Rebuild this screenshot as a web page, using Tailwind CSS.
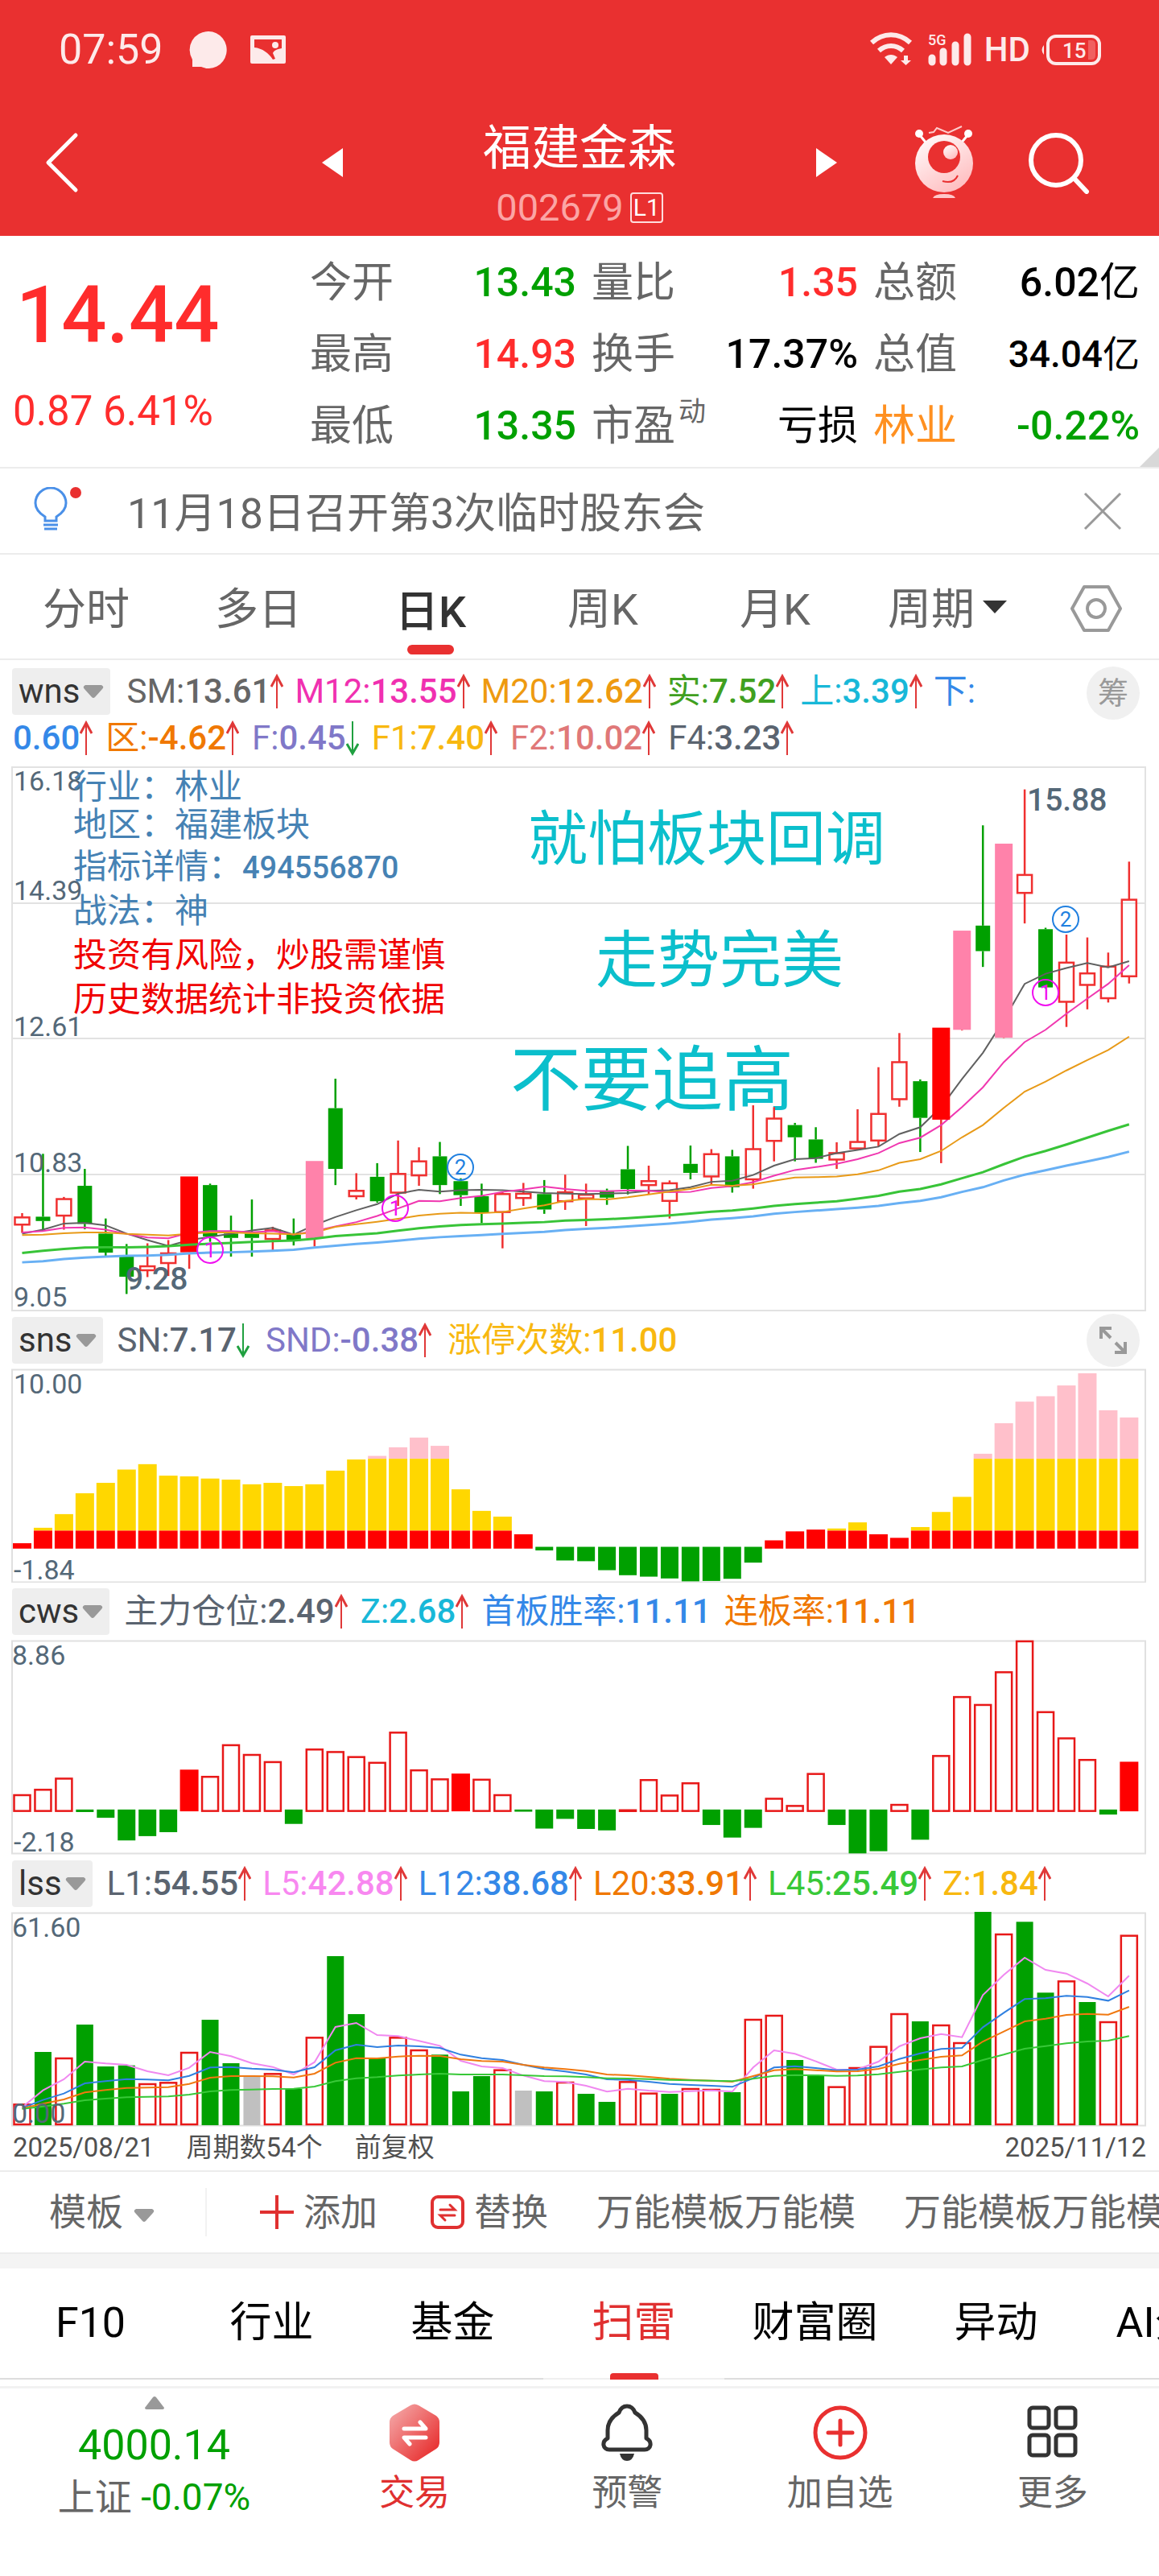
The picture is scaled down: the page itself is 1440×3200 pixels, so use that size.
<!DOCTYPE html>
<html lang="zh-CN">
<head>
    <meta charset="UTF-8">
    <meta name="viewport" content="width=device-width, initial-scale=1.0">
    <title>福建金森 002679</title>
    <script src="https://cdn.jsdelivr.net/npm/@tailwindcss/browser@4"></script>
</head>
<body class="bg-white text-[#666] font-[Roboto,'Noto_Sans_CJK_SC',sans-serif] overflow-x-hidden">
    <header class="bg-[#e93030] text-white">
        <!-- Status bar -->
        <div class="flex h-[124px] items-center justify-between pl-[73px] pr-[72px] text-[#fdeaea]">
            <div class="flex items-center">
                <span class="text-[52px] leading-none">07:59</span>
                <svg class="ml-8 h-12 w-12" viewBox="0 0 48 48" fill="currentColor"><path d="M24 1a22.500 23 0 1 1-9 44H4v-9A23 23 0 0 1 24 1z"/></svg>
                <svg class="ml-7 h-9 w-11" viewBox="0 0 44 36"><rect width="44" height="35" rx="2" fill="currentColor"/><path d="M5 5h34v11c-6 1-10 3-11 6l3 7-3 1c-5-8-13-14-23-15z" fill="#e93030"/><circle cx="31" cy="12" r="4" fill="currentColor"/></svg>
            </div>
            <div class="flex items-center">
                <svg class="h-11 w-[54px]" viewBox="0 0 54 44" fill="none" stroke="currentColor">
                    <path d="M2 13c14-13 34-13 48 0" stroke-width="6"/>
                    <path d="M11 23c9-8 21-8 30 0" stroke-width="6"/>
                    <path d="M18 31c5-4 11-4 16 0l-8 9z" fill="currentColor" stroke="none"/>
                    <path d="M42 29h5v6h4l-6.500 6-6.500-6h4z" fill="currentColor" stroke="none"/>
                </svg>
                <svg class="ml-[18px] h-11 w-[54px]" viewBox="0 0 54 44" fill="none" stroke="currentColor" stroke-linecap="round">
                    <path d="M5 32v5M19 24v13M34 16v21M49 6v31" stroke-width="9"/>
                    <text x="0" y="16" font-size="18" font-weight="500" fill="currentColor" stroke="none">5G</text>
                </svg>
                <span class="ml-4 text-[42px] leading-none font-medium">HD</span>
                <svg class="ml-3 h-10 w-[76px]" viewBox="0 0 76 40" fill="none">
                    <rect x="10" y="3" width="64" height="34" rx="10" stroke="currentColor" stroke-width="4"/>
                    <path d="M5 14q-5 6 0 12z" fill="currentColor"/>
                    <path d="M60 8h4q5 0 5 5v14q0 5-5 5h-4z" fill="#f06060"/>
                    <text x="28" y="30" font-size="26" font-weight="500" fill="currentColor">15</text>
                </svg>
            </div>
        </div>
        <!-- Title bar -->
        <div class="grid grid-cols-[1fr_640px_1fr]">
            <div class="flex h-[156px] items-center pl-14">
                <button aria-label="返回">
                    <svg class="h-[76px] w-[42px]" viewBox="0 0 42 76" fill="none" stroke="currentColor" stroke-width="5" stroke-linecap="round" stroke-linejoin="round"><path d="M38 4 4 38l34 34"/></svg>
                </button>
            </div>
            <div class="flex justify-between">
                <button class="h-[156px]" aria-label="上一只">
                    <svg class="h-9 w-[26px]" viewBox="0 0 26 36" fill="currentColor"><path d="M26 0v36L0 18z"/></svg>
                </button>
                <div class="flex flex-col items-center pt-[23px]">
                    <h1 class="text-[60px] leading-[76px]">福建金森</h1>
                    <div class="flex items-center gap-2 text-[47px] leading-[70px] text-[#fba5a5]">
                        002679
                        <span class="rounded border-2 border-[#fdd] px-[2px] text-[30px] leading-[34px] text-white">L1</span>
                    </div>
                </div>
                <button class="h-[156px]" aria-label="下一只">
                    <svg class="h-9 w-[26px]" viewBox="0 0 26 36" fill="currentColor"><path d="M0 0v36l26-18z"/></svg>
                </button>
            </div>
            <div class="flex h-[156px] items-center justify-end gap-[67px] pr-[85px]">
                <button aria-label="助手">
                    <svg class="h-[92px] w-[74px]" viewBox="0 0 74 92" fill="none">
                        <defs><linearGradient id="face" x1="0" y1="0" x2="0.600" y2="1"><stop offset="0" stop-color="#fff"/><stop offset="1" stop-color="#ffc0c2"/></linearGradient></defs>
                        <path d="m18 9 6-1 4-5 14 6 17-8" stroke="#fcc" stroke-width="2"/>
                        <path d="m6 11 10 12M67 11 57 23" stroke="#fff" stroke-width="3"/>
                        <circle cx="6" cy="10" r="5" fill="#fff"/><circle cx="67" cy="10" r="5" fill="#fff"/>
                        <circle cx="37" cy="47" r="36" fill="url(#face)"/>
                        <circle cx="37" cy="39" r="20" fill="#e93030"/>
                        <circle cx="45" cy="33" r="9" fill="url(#face)"/>
                        <path d="M35 69q14 4 19-7" stroke="#e93030" stroke-width="2"/>
                        <path d="M23 90q2-5 14-5t14 5z" fill="#ffc8ca"/>
                    </svg>
                </button>
                <button aria-label="搜索">
                    <svg class="h-[78px] w-[78px]" viewBox="0 0 78 78" fill="none" stroke="currentColor" stroke-width="6" stroke-linecap="round"><circle cx="35" cy="36" r="31"/><path d="m58 59 15 16"/></svg>
                </button>
            </div>
        </div>
    </header>

    <!-- Quote -->
    <section class="relative flex border-b-2 border-[#ececec] pb-[6px]">
        <div class="w-[385px] shrink-0 pt-[38px] text-[#ff2c2c] leading-[120px]">
            <p class="pl-5 text-[99px] font-medium">14.44</p>
            <p class="pl-4 text-[51px]">0.87 6.41%</p>
        </div>
        <dl class="grid flex-1 grid-cols-3 gap-x-[19px] pr-6 pt-[14px] text-[50px] leading-[89px]">
            <div class="flex justify-between"><dt class="text-[52px]">今开</dt><dd class="font-medium text-[#00a000]">13.43</dd></div>
            <div class="flex justify-between"><dt class="text-[52px]">量比</dt><dd class="font-medium text-[#ff2c2c]">1.35</dd></div>
            <div class="flex justify-between"><dt class="text-[52px]">总额</dt><dd class="text-black"><span class="font-medium">6.02</span>亿</dd></div>
            <div class="flex justify-between"><dt class="text-[52px]">最高</dt><dd class="font-medium text-[#ff2c2c]">14.93</dd></div>
            <div class="flex justify-between"><dt class="text-[52px]">换手</dt><dd class="font-medium text-black">17.37%</dd></div>
            <div class="flex justify-between"><dt class="text-[52px]">总值</dt><dd class="text-[46px] text-black"><span class="font-medium">34.04</span>亿</dd></div>
            <div class="flex justify-between"><dt class="text-[52px]">最低</dt><dd class="font-medium text-[#00a000]">13.35</dd></div>
            <div class="flex justify-between"><dt class="flex text-[52px]">市盈<span class="ml-1 text-[34px] leading-[52px]">动</span></dt><dd class="text-black">亏损</dd></div>
            <div class="flex justify-between"><dt class="text-[52px] text-[#ff9020]">林业</dt><dd class="font-medium text-[#00a000]">-0.22%</dd></div>
        </dl>
        <svg class="absolute right-0 bottom-0 h-6 w-6" viewBox="0 0 24 24"><path d="M24 0v24H0z" fill="#d8d8d8"/></svg>
    </section>

    <!-- Notice -->
    <section class="flex h-[107px] items-center justify-between border-b-2 border-[#ececec] pl-[42px] pr-[46px]">
        <a href="#" class="flex items-center">
            <svg class="h-[60px] w-[60px]" viewBox="0 0 60 60" fill="none" stroke="#4a90e8" stroke-width="3">
                <path d="M14 42v-5C6 32 2 27 2 20a19 19 0 0 1 38 0c0 7-4 12-12 17v5zM12 47h18M13 52h16"/>
                <circle cx="52" cy="7" r="7" fill="#e93030" stroke="none"/>
            </svg>
            <span class="ml-14 pt-2 text-[52px] leading-[64px]">11月18日召开第3次临时股东会</span>
        </a>
        <button aria-label="关闭">
            <svg class="h-12 w-12" viewBox="0 0 48 48" stroke="#999" stroke-width="3"><path d="m2 2 44 44M46 2 2 46"/></svg>
        </button>
    </section>

    <!-- Period tabs -->
    <nav class="flex h-[131px] border-b-2 border-[#ececec] text-[54px] leading-[80px]">
        <button class="w-[214px] pt-2">分时</button>
        <button class="w-[214px] pt-2">多日</button>
        <button class="flex w-[214px] flex-col items-center justify-end pb-[5px] font-medium text-[#333]">日K<span class="h-3 w-[58px] rounded-full bg-[#e93030]"></span></button>
        <button class="w-[214px] pt-2">周K</button>
        <button class="w-[214px] pt-2">月K</button>
        <button class="flex w-[214px] items-center justify-center gap-[10px] pt-2">周期<svg class="mb-2 h-4 w-[30px]" viewBox="0 0 30 16" fill="#333"><path d="M0 0h30L15 16z"/></svg></button>
        <button class="flex flex-1 items-center justify-center pt-1" aria-label="设置">
            <svg class="h-[58px] w-[64px]" viewBox="0 0 64 58" fill="none" stroke="#999" stroke-width="4" stroke-linejoin="round"><path d="M17 2h30l15 27-15 27H17L2 29z"/><circle cx="32" cy="29" r="11"/></svg>
        </button>
    </nav>

    <!-- Main chart -->
    <section>
        <div class="flex h-[132px] items-start justify-between pr-6 text-[42px] leading-[58px]">
            <div class="pt-[10px]">
                <div class="flex items-center gap-5 pl-[15px]">
                    <button class="flex h-[58px] items-center gap-1 rounded bg-[#eee] px-2 text-[#333]">wns<svg class="h-4 w-[26px]" viewBox="0 0 26 16" fill="#999"><path d="M3 0h20q4 2 1 5l-9 10q-2 2-4 0L2 5q-3-3 1-5z"/></svg></button>
                    <ul class="flex gap-[14px]" data-legend="SM:|13.61|up|#666;M12:|13.55|up|#f030b0;M20:|12.62|up|#ee9a10;实:|7.52|up|#40a020;上:|3.39|up|#18b8d8;下:|||#3488e8"></ul>
                </div>
                <ul class="flex gap-4 pl-4" data-legend="|0.60|up|#3488e8;区:|-4.62|up|#f07800;F:|0.45|down|#8078c8;F1:|7.40|up|#f8b810;F2:|10.02|up|#e07878;F4:|3.23|up|#5a6470"></ul>
            </div>
            <button class="mt-[8px] h-[66px] w-[66px] rounded-full bg-[#f0f0f0] text-[38px] text-[#999]">筹</button>
        </div>
        <svg class="block h-auto w-full" viewBox="0 12 1440 678" fill="none">
            <path d="M15 13h1408v675H15zM15 182h1408M15 350h1408M15 519h1408" stroke="#e2e2e2" stroke-width="2"/>
            <g fill="#0bbfcc">
                <text x="656" y="128" font-size="74">就怕板块回调</text>
                <text x="740" y="280" font-size="77">走势完美</text>
                <text x="634" y="432" font-size="88">不要追高</text>
            </g>
            <g id="kline"></g>
            <g fill="#546878" font-size="34">
                <text x="17" y="42">16.18</text>
                <text x="17" y="178">14.39</text>
                <text x="17" y="347">12.61</text>
                <text x="17" y="516">10.83</text>
                <text x="17" y="683">9.05</text>
                <text x="1276" y="67" font-size="39" font-weight="500">15.88</text>
                <text x="156" y="662" font-size="39" font-weight="500">9.28</text>
            </g>
            <g fill="#4682b4" font-size="42">
                <text x="91" y="52">行业：林业</text>
                <text x="91" y="99">地区：福建板块</text>
                <text x="91" y="151">指标详情：<tspan font-size="38" font-weight="500">494556870</tspan></text>
                <text x="91" y="206">战法：神</text>
                <g fill="#f00000">
                    <text x="91" y="261">投资有风险，炒股需谨慎</text>
                    <text x="91" y="316">历史数据统计非投资依据</text>
                </g>
            </g>
            <g font-size="26" text-anchor="middle" stroke-width="2">
                <g fill="#f010f0">
                    <circle cx="261" cy="613" r="16" fill="none" stroke="#f010f0"/><text x="261" y="622">1</text>
                    <circle cx="491" cy="561" r="16" fill="none" stroke="#f010f0"/><text x="491" y="570">1</text>
                    <circle cx="1299" cy="293" r="16" fill="none" stroke="#f010f0"/><text x="1299" y="302">1</text>
                </g>
                <g fill="#2080e0">
                    <circle cx="572" cy="510" r="16" fill="none" stroke="#2080e0"/><text x="572" y="519">2</text>
                    <circle cx="1324" cy="202" r="16" fill="none" stroke="#2080e0"/><text x="1324" y="211">2</text>
                </g>
            </g>
        </svg>
    </section>

    <!-- sns -->
    <section>
        <div class="flex h-[70px] items-center justify-between pl-[15px] pr-6 text-[42px] leading-[58px]">
            <div class="flex items-center gap-[18px]">
                <button class="flex h-[58px] items-center gap-1 rounded bg-[#eee] px-2 text-[#333]">sns<svg class="h-4 w-[26px]" viewBox="0 0 26 16" fill="#999"><path d="M3 0h20q4 2 1 5l-9 10q-2 2-4 0L2 5q-3-3 1-5z"/></svg></button>
                <ul class="flex gap-5" data-legend="SN:|7.17|down|#5a6470;SND:|-0.38|up|#8078c8;涨停次数:|11.00||#f8b810"></ul>
            </div>
            <button class="flex h-[66px] w-[66px] items-center justify-center rounded-full bg-[#f0f0f0]" aria-label="展开">
                <svg class="h-[34px] w-[34px]" viewBox="0 0 34 34" fill="none" stroke="#999" stroke-width="4"><path d="M2 15V2h13M2 2l12 12M32 19v13H19M32 32 20 20"/></svg>
            </button>
        </div>
        <svg class="block h-auto w-full" viewBox="0 70 1440 266" fill="none">
            <path d="M15 71.500h1408v264H15z" stroke="#e0e0e0" stroke-width="2"/>
            <g id="sns"></g>
            <g fill="#546878" font-size="34"><text x="17" y="101">10.00</text><text x="17" y="332">-1.84</text></g>
        </svg>
    </section>

    <!-- cws -->
    <section>
        <div class="flex h-[71px] items-center gap-[18px] pl-[15px] text-[42px] leading-[58px]">
            <button class="flex h-[58px] items-center gap-1 rounded bg-[#eee] px-2 text-[#333]">cws<svg class="h-4 w-[26px]" viewBox="0 0 26 16" fill="#999"><path d="M3 0h20q4 2 1 5l-9 10q-2 2-4 0L2 5q-3-3 1-5z"/></svg></button>
            <ul class="flex gap-4" data-legend="主力仓位:|2.49|up|#5a6470;Z:|2.68|up|#18b8d8;首板胜率:|11.11||#3488e8;连板率:|11.11||#f07800"></ul>
        </div>
        <svg class="block h-auto w-full" viewBox="0 407 1440 267" fill="none">
            <path d="M15 408.500h1408v264H15z" stroke="#e0e0e0" stroke-width="2"/>
            <g id="cws"></g>
            <g fill="#546878" font-size="34"><text x="15" y="438">8.86</text><text x="17" y="670">-2.18</text></g>
        </svg>
    </section>

    <!-- lss -->
    <section>
        <div class="flex h-[71px] items-center gap-[18px] pl-[15px] text-[42px] leading-[58px]">
            <button class="flex h-[58px] items-center gap-1 rounded bg-[#eee] px-2 text-[#333]">lss<svg class="h-4 w-[26px]" viewBox="0 0 26 16" fill="#999"><path d="M3 0h20q4 2 1 5l-9 10q-2 2-4 0L2 5q-3-3 1-5z"/></svg></button>
            <ul class="flex gap-[14px]" data-legend="L1:|54.55|up|#5a6470;L5:|42.88|up|#f888f0;L12:|38.68|up|#3488e8;L20:|33.91|up|#f07800;L45:|25.49|up|#38c838;Z:|1.84|up|#f8b810"></ul>
        </div>
        <svg class="block h-auto w-full" viewBox="0 55 1440 267" fill="none">
            <path d="M15 56.500h1408v264H15z" stroke="#e0e0e0" stroke-width="2"/>
            <g id="lss"></g>
            <g fill="#546878" font-size="34"><text x="15" y="86">61.60</text><text x="15" y="317">0.00</text></g>
        </svg>
        <div class="flex h-[56px] items-center gap-10 border-b-2 border-[#ececec] px-4 pb-1 text-[33px] leading-none text-[#505050]">
            <span>2025/08/21</span><span>周期数54个</span><span>前复权</span><span class="ml-auto">2025/11/12</span>
        </div>
    </section>

    <!-- Templates -->
    <div class="flex h-[100px] items-center overflow-hidden whitespace-nowrap text-[46px] leading-[60px]">
        <button class="flex w-[257px] shrink-0 items-center gap-3 border-r-2 border-[#f2f2f2] pl-[61px]">模板<svg class="mt-2 h-4 w-7" viewBox="0 0 26 16" fill="#999"><path d="M3 0h20q4 2 1 5l-9 10q-2 2-4 0L2 5q-3-3 1-5z"/></svg></button>
        <button class="ml-[66px] flex shrink-0 items-center gap-3"><svg class="h-[42px] w-[42px]" viewBox="0 0 42 42" stroke="#e03030" stroke-width="4"><path d="M21 0v42M0 21h42"/></svg>添加</button>
        <button class="ml-[66px] flex shrink-0 items-center gap-3">
            <svg class="h-[42px] w-[42px]" viewBox="0 0 42 42" fill="none" stroke="#e03030" stroke-width="4" stroke-linecap="round"><rect x="2" y="2" width="38" height="38" rx="7"/><path d="M12 18h18l-6-6M30 25H12l6 6" stroke-width="3"/></svg>替换
        </button>
        <button class="ml-[60px] shrink-0">万能模板万能模</button>
        <button class="ml-[60px] shrink-0">万能模板万能模</button>
    </div>
    <div class="h-5 border-t-2 border-[#ececec] bg-[#f4f4f4]"></div>

    <!-- Content tabs -->
    <nav class="flex h-[138px] overflow-hidden text-[52px] leading-[136px] whitespace-nowrap text-black">
        <button class="w-[225px] shrink-0 border-b-2 border-[#ddd]">F10</button>
        <button class="w-[225px] shrink-0 border-b-2 border-[#ddd]">行业</button>
        <button class="w-[225px] shrink-0 border-b-2 border-[#ddd]">基金</button>
        <button class="relative w-[225px] shrink-0 border-b-2 border-[#f0f0f0] text-[#e03030]">扫雷<span class="absolute -bottom-[2px] left-1/2 h-2 w-[60px] -translate-x-1/2 rounded-t bg-[#e93030]"></span></button>
        <button class="w-[225px] shrink-0 border-b-2 border-[#ddd]">财富圈</button>
        <button class="w-[225px] shrink-0 border-b-2 border-[#ddd]">异动</button>
        <button class="w-[225px] shrink-0 border-b-2 border-[#ddd]">AI分析</button>
    </nav>

    <!-- Bottom bar -->
    <footer class="mt-2 flex border-t-[3px] border-[#f2f2f2] text-[44px]">
        <a href="#" class="flex w-[383px] flex-col items-center pt-[10px] text-[#00a000]">
            <svg class="h-4 w-6" viewBox="0 0 24 16" fill="#999"><path d="M10 1q2-2 4 0l10 13q0 2-2 2H2q-2 0-2-2z"/></svg>
            <span class="mt-[14px] text-[52px] leading-[62px]">4000.14</span>
            <span class="text-[46px] leading-[66px]"><span class="text-[#666]">上证</span> -0.07%</span>
        </a>
        <a href="#" class="flex flex-1 flex-col items-center gap-1 pt-[18px] leading-[68px] text-[#e03030]">
            <svg class="h-[74px] w-[66px]" viewBox="0 0 66 74" fill="none">
                <defs><linearGradient id="hex" x1="0" y1="0" x2="1" y2="1"><stop offset="0" stop-color="#f5b0b0"/><stop offset="1" stop-color="#e62020"/></linearGradient></defs>
                <path d="M28 3q5-3 10 0l22 13q4 3 4 8v25q0 5-4 8L38 71q-5 3-10 0L6 57q-4-3-4-8V24q0-5 4-8z" fill="url(#hex)"/>
                <path d="M20 32h27l-7-8M47 43H20l7 8" stroke="#fff" stroke-width="5" stroke-linecap="round" stroke-linejoin="round"/>
            </svg>交易
        </a>
        <a href="#" class="flex flex-1 flex-col items-center gap-1 pt-[18px] leading-[68px]">
            <svg class="h-[74px] w-[66px]" viewBox="0 0 66 74" fill="none">
                <path d="M33 4q7 0 10 8c10 6 14 13 14 22v10c8 4 6 14-2 14H11c-8 0-10-10-2-14V34c0-9 4-16 14-22q3-8 10-8z" stroke="#333" stroke-width="5" stroke-linejoin="round"/>
                <path d="M24 63h18q-2 9-9 9t-9-9z" fill="#333"/>
            </svg>预警
        </a>
        <a href="#" class="flex flex-1 flex-col items-center gap-1 pt-[18px] leading-[68px]">
            <svg class="h-[74px] w-[74px]" viewBox="0 0 74 74" fill="none" stroke="#e93030" stroke-width="5" stroke-linecap="round"><circle cx="37" cy="37" r="31"/><path d="M37 22v30M22 37h30"/></svg>加自选
        </a>
        <a href="#" class="flex flex-1 flex-col items-center gap-1 pt-[18px] leading-[68px]">
            <svg class="h-[74px] w-[66px]" viewBox="0 0 66 74" fill="none" stroke="#333" stroke-width="5"><rect x="4" y="6" width="24" height="25" rx="4"/><rect x="37" y="6" width="24" height="25" rx="4"/><rect x="4" y="40" width="24" height="25" rx="4"/><rect x="37" y="40" width="24" height="25" rx="4"/></svg>更多
        </a>
    </footer>

    <script>
        const GREEN = "#00a000", RED = "#e81818";
        const x = i => 27.5 + i * 25.95;
        const rect = (i, top, bottom, w, fill, stroke) =>
            `<rect x="${x(i) - w / 2}" y="${top}" width="${w}" height="${Math.max(bottom - top, 1)}" fill="${fill}" stroke="${stroke || "none"}" stroke-width="2.5"/>`;
        const line = (values, scale, color, width) =>
            `<polyline points="${values.map((v, i) => x(i) + "," + v / scale).join(" ")}" stroke="${color}" stroke-width="${width}"/>`;
        const nums = s => s.split(" ").map(Number);
        const draw = (id, html) => document.getElementById(id).innerHTML = html;

        // legends: label|value|arrow|color
        const arrows = {
            up: '<svg class="h-11 w-4" viewBox="0 0 16 44" fill="none" stroke="#e03838" stroke-width="2"><path d="M8 2v41"/><path d="M1 16 8 3l7 13" stroke-width="3"/></svg>',
            down: '<svg class="h-11 w-4" viewBox="0 0 16 44" fill="none" stroke="#20a040" stroke-width="2"><path d="M8 1v40"/><path d="m1 29 7 12 7-12" stroke-width="3"/></svg>'
        };
        document.querySelectorAll("[data-legend]").forEach(el => {
            el.innerHTML = el.dataset.legend.split(";").map(item => {
                const [label, value, arrow, color] = item.split("|");
                return `<li class="flex items-center whitespace-nowrap" style="color:${color}">${label}<span class="font-medium">${value}</span>${arrows[arrow] || ""}</li>`;
            }).join("");
        });

        // candles: kind, high, body top, body bottom, low (r hollow, g green, R limit up, P pink)
        const U = 2.24;
        const candles = `r 1270 1282 1302 1325,g 1105 1280 1292 1320,r 1225 1231 1277 1316,g 1147 1194 1300 1315,g 1285 1327 1380 1390,g 1356 1391 1447 1495,r 1354 1418 1429 1448,r 1345 1382 1409 1445,R 1168 1168 1379 1425,g 1188 1192 1335 1350,g 1277 1327 1339 1391,g 1232 1327 1339 1391,r 1308 1318 1342 1373,g 1285 1330 1347 1360,P 1125 1125 1340 1363,g 896 978 1147 1192,r 1159 1208 1223 1232,g 1131 1169 1237 1241,r 1068 1161 1213 1250,r 1087 1126 1165 1194,g 1072 1112 1192 1217,g 1173 1181 1220 1250,g 1188 1223 1269 1298,r 1212 1217 1267 1368,r 1186 1216 1228 1250,g 1178 1217 1260 1272,r 1163 1212 1237 1261,r 1188 1219 1229 1306,g 1202 1207 1227 1247,g 1083 1148 1203 1218,r 1138 1181 1192 1217,r 1179 1187 1236 1285,g 1082 1133 1158 1176,r 1092 1106 1168 1190,g 1094 1112 1198 1213,r 970 1092 1176 1202,r 975 1007 1069 1126,g 1019 1025 1059 1126,g 1031 1065 1119 1130,r 1073 1103 1121 1147,r 981 1072 1090 1092,r 864 994 1068 1084,r 769 850 953 974,g 898 903 1005 1100,R 754 754 1010 1131,P 484 484 760 762,g 191 470 541 585,P 242 242 782 783,r 91 329 379 464,g 476 480 642 645,r 495 573 682 752,r 503 603 635 703,r 545 584 672 684,r 292 398 611 631`
            .split(",").map(s => s.split(" "));
        const wick = (i, a, b, color) => b > a ? `<path d="M${x(i)} ${a / U}V${b / U}" stroke="${color}" stroke-width="2.5"/>` : "";
        let thin = "", solid = "";
        candles.forEach(([k, h, t, b, l], i) => {
            [h, t, b, l] = [h, t, b, l].map(Number);
            const color = k === "g" ? GREEN : "#f03030";
            thin += wick(i, h, t, color) + wick(i, b, l, color);
            if (k === "g") thin += rect(i, t / U, b / U, 18, GREEN);
            else if (k === "r") thin += rect(i, t / U, b / U, 18, "none", color);
            else solid += rect(i, t / U, b / U, 22, k === "R" ? "#ff0000" : "#ff82aa");
        });
        draw("kline", thin
            + line(nums("1327 1316 1299 1297 1304 1327 1345 1361 1345 1336 1327 1318 1311 1330 1303 1281 1262 1245 1216 1205 1210 1206 1205 1206 1210 1214 1216 1217 1216 1214 1208 1206 1198 1183 1180 1164 1138 1120 1117 1103 1094 1085 1050 1031 975 897 824 733 632 604 588 574 586 569"), U, "#606060", 2)
            + line(nums("1324 1320 1311 1310 1316 1328 1338 1340 1325 1320 1320 1323 1320 1330 1320 1307 1295 1278 1257 1236 1237 1228 1222 1211 1204 1196 1203 1208 1209 1207 1208 1212 1211 1200 1195 1184 1166 1150 1142 1133 1120 1103 1075 1060 1025 975 920 850 794 760 715 673 632 580"), U, "#f038b0", 2)
            + line(nums("1331 1330 1326 1324 1324 1328 1330 1332 1327 1324 1324 1326 1327 1329 1324 1308 1301 1294 1286 1277 1272 1269 1270 1267 1257 1248 1236 1231 1232 1226 1218 1210 1203 1191 1194 1190 1180 1171 1170 1168 1162 1151 1130 1120 1097 1059 1025 977 932 904 873 844 816 779"), U, "#e89a18", 2)
            + solid
            + line(nums("1381 1375 1370 1366 1365 1365 1364 1362 1358 1355 1353 1350 1348 1346 1341 1334 1330 1326 1319 1312 1307 1303 1301 1299 1297 1295 1291 1289 1287 1284 1280 1276 1271 1266 1263 1257 1250 1245 1241 1237 1230 1222 1210 1203 1190 1173 1156 1134 1113 1097 1079 1060 1041 1023"), U, "#38c438", 3)
            + line(nums("1407 1404 1398 1394 1391 1389 1388 1386 1382 1380 1379 1377 1375 1372 1366 1361 1356 1352 1347 1341 1337 1334 1331 1328 1325 1322 1317 1314 1311 1307 1303 1299 1294 1288 1284 1279 1272 1267 1263 1259 1255 1250 1242 1236 1226 1211 1198 1179 1163 1151 1138 1126 1114 1099"), U, "#68b0f4", 3));

        // stacked bars: red up to 608, gold up to 408, pink above; below the axis green
        draw("sns", nums("643 600 562 504 475 438 423 455 457 463 466 479 475 484 479 441 410 400 376 349 372 493 553 569 618 663 691 693 718 732 736 741 749 748 742 697 635 610 605 602 585 618 628 598 556 514 394 309 249 234 204 170 273 293").map((v, i) => {
            if (v > 658) return rect(i, 653 / U, v / U, 22, GREEN);
            return (v < 408 ? rect(i, v / U, 408 / U, 23, "#ffc0cb") : "")
                + (v < 604 ? rect(i, Math.max(v, 408) / U, 608 / U, 23, "#ffd700") : "")
                + rect(i, (v < 604 ? 608 : v) / U, 658 / U, 23, "#ff0000");
        }).join(""));

        draw("cws", "r1343 r1328 r1297 g1391 g1407 g1470 g1458 g1447 R1273 r1292 r1204 r1231 r1251 g1424 r1216 r1223 r1237 r1253 r1169 r1274 r1299 R1284 r1300 r1343 g1390 g1437 g1410 g1438 g1442 r1385 r1301 r1344 r1310 g1427 g1462 g1435 r1353 r1373 r1284 g1427 g1506 g1500 r1370 g1468 r1234 r1070 r1092 r1001 r915 r1112 r1185 r1245 g1398 R1251".split(" ").map((s, i) => {
            const v = +s.slice(1);
            if (s[0] === "g") return rect(i, 1384 / U, v / U, 22, GREEN);
            if (s[0] === "R") return rect(i, v / U, 1389 / U, 23, "#ff0000");
            return rect(i, (v + 1) / U, 1388 / U, 20, "#fff", RED);
        }).join(""));

        draw("lss", "r883 g687 r711 g585 g741 g737 r807 r802 r690 g567 g729 n778 r769 g825 r634 g330 g546 g711 r634 r681 g697 g834 g777 r755 n831 g834 r801 g843 g873 r799 r842 g843 r825 r828 g837 r567 r552 g717 g775 r818 r747 r668 r546 g573 r588 r654 g165 r249 g202 g466 r424 g501 r576 r254".split(" ").map((s, i) => {
            const v = +s.slice(1);
            if (s[0] === "r") return rect(i, v / 3, 957 / 3, 20, "#fff", RED);
            return rect(i, v / 3, 960 / 3, 21, s[0] === "g" ? GREEN : "#c0c0c0");
        }).join("")
            + line(nums("893 830 789 723 730 735 759 774 746 687 703 729 743 771 725 594 579 624 628 646 664 720 741 747 775 796 799 813 835 824 831 836 833 830 835 745 681 694 722 753 752 723 666 636 620 632 475 400 336 381 395 432 480 403"), 3, "#f088f0", 2)
            + line(nums("896 866 842 804 796 788 790 793 776 745 743 749 753 763 744 681 660 669 663 666 672 697 710 717 735 751 760 771 789 791 798 806 810 813 817 785 745 740 747 755 753 741 713 692 676 672 595 541 490 487 478 482 496 458"), 3, "#3080e0", 2)
            + line(nums("898 880 864 838 829 821 820 818 806 783 777 777 778 782 768 727 710 711 704 701 702 714 721 723 735 745 751 758 771 774 780 787 791 794 798 777 755 751 755 760 759 750 731 717 705 700 648 611 573 563 549 545 548 519"), 3, "#f07810", 2)
            + line(nums("899 890 880 867 861 856 854 853 846 834 829 827 825 824 816 796 785 781 775 771 768 771 771 771 774 777 778 781 785 786 788 791 793 794 796 787 776 773 774 776 775 770 761 752 745 741 717 697 675 665 655 648 645 628"), 3, "#38c838", 2));
    </script>
</body>
</html>
